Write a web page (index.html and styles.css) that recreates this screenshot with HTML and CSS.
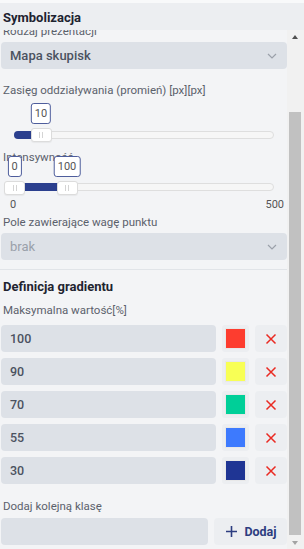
FILE: index.html
```html
<!DOCTYPE html>
<html lang="pl">
<head>
    <meta charset="UTF-8">
    <meta name="viewport" content="width=device-width, initial-scale=1.0">
    <link rel="stylesheet" href="styles.css">
    <title>Symbolizacja</title>
</head>
<body>
    <div class="panel">
        <h3 class="panel-title">Symbolizacja</h3>
        <div class="panel-body">
            <div class="viewport">
                <div class="content">
                    <label class="lbl">Rodzaj prezentacji</label>
                    <div class="select">
                        <span>Mapa skupisk</span>
                        <svg class="chev" width="10" height="6" viewBox="0 0 10 6"><path d="M1 1l4 4 4-4" fill="none" stroke="#9ba1aa" stroke-width="1.2"/></svg>
                    </div>

                    <label class="lbl lbl-gap">Zasięg oddziaływania (promień) [px][px]</label>
                    <div class="slider slider-one">
                        <div class="track" style="left:13px;right:13px"></div>
                        <div class="fill" style="left:13px;width:27px"></div>
                        <div class="bubble" style="left:40px">10</div>
                        <div class="thumb" style="left:40px"><i></i><i></i></div>
                    </div>

                    <label class="lbl lbl-int">Intensywność</label>
                    <div class="slider slider-two">
                        <div class="track" style="left:3px;right:13px"></div>
                        <div class="fill" style="left:13px;width:53px"></div>
                        <div class="bubble" style="left:13.5px">0</div>
                        <div class="bubble" style="left:66px">100</div>
                        <div class="thumb" style="left:13.5px"><i></i><i></i></div>
                        <div class="thumb" style="left:66px"><i></i><i></i></div>
                    </div>
                    <div class="ticks"><span>0</span><span>500</span></div>

                    <label class="lbl lbl-pole">Pole zawierające wagę punktu</label>
                    <div class="select select-off">
                        <span>brak</span>
                        <svg class="chev" width="10" height="6" viewBox="0 0 10 6"><path d="M1 1l4 4 4-4" fill="none" stroke="#9ba1aa" stroke-width="1.2"/></svg>
                    </div>

                    <hr class="divider">

                    <h4 class="section">Definicja gradientu</h4>
                    <label class="lbl lbl-max">Maksymalna wartość[%]</label>

                    <div class="rows">
                        <div class="row">
                            <div class="inp">100</div>
                            <div class="swatch"><span style="background:#fd3d2f"></span></div>
                            <button class="del"><svg width="12" height="12" viewBox="0 0 12 12"><path d="M1.5 1.5l9 9M10.5 1.5l-9 9" stroke="#ea2a22" stroke-width="1.5"/></svg></button>
                        </div>
                        <div class="row">
                            <div class="inp">90</div>
                            <div class="swatch"><span style="background:#f8ff55"></span></div>
                            <button class="del"><svg width="12" height="12" viewBox="0 0 12 12"><path d="M1.5 1.5l9 9M10.5 1.5l-9 9" stroke="#ea2a22" stroke-width="1.5"/></svg></button>
                        </div>
                        <div class="row">
                            <div class="inp">70</div>
                            <div class="swatch"><span style="background:#00cf98"></span></div>
                            <button class="del"><svg width="12" height="12" viewBox="0 0 12 12"><path d="M1.5 1.5l9 9M10.5 1.5l-9 9" stroke="#ea2a22" stroke-width="1.5"/></svg></button>
                        </div>
                        <div class="row">
                            <div class="inp">55</div>
                            <div class="swatch"><span style="background:#3d7afe"></span></div>
                            <button class="del"><svg width="12" height="12" viewBox="0 0 12 12"><path d="M1.5 1.5l9 9M10.5 1.5l-9 9" stroke="#ea2a22" stroke-width="1.5"/></svg></button>
                        </div>
                        <div class="row">
                            <div class="inp">30</div>
                            <div class="swatch"><span style="background:#1f3594"></span></div>
                            <button class="del"><svg width="12" height="12" viewBox="0 0 12 12"><path d="M1.5 1.5l9 9M10.5 1.5l-9 9" stroke="#ea2a22" stroke-width="1.5"/></svg></button>
                        </div>
                    </div>

                    <label class="lbl lbl-add">Dodaj kolejną klasę</label>
                    <div class="add-row">
                        <div class="inp"></div>
                        <button class="add"><svg width="11" height="11" viewBox="0 0 11 11"><path d="M5.5 0v11M0 5.5h11" stroke="#2d3d80" stroke-width="1.6"/></svg>Dodaj</button>
                    </div>
                </div>
            </div>
            <div class="scrollbar">
                <span class="arrow up"></span>
                <div class="sb-thumb"></div>
                <span class="arrow down"></span>
            </div>
        </div>
    </div>
</body>
</html>
```

FILE: styles.css
```css
*{box-sizing:border-box;}
body{margin:0;background:#f3f4f6;font-family:Roboto,"Noto Sans",sans-serif;}

.panel{padding-top:3px;background:#f8f9fa;height:549px;display:flex;flex-direction:column;}
.panel-title{margin:0;height:27px;padding:0 3px;background:#eceef1;font-size:13px;font-weight:700;line-height:29px;color:#1d2330;}
.panel-body{flex:1;display:flex;background:#f3f4f6;min-height:0;}

.viewport{width:287px;overflow:hidden;}
.content{margin-top:-6px;padding-left:1px;}

.lbl{display:block;padding-left:2px;font-size:11.5px;line-height:14px;color:#5b616c;margin-bottom:4px;}
.lbl-gap{margin-top:14px;margin-bottom:0;}
.lbl-int{margin-top:8px;margin-bottom:0;}
.lbl-pole{margin-top:3px;}
.lbl-max{margin-top:8px;margin-bottom:8px;}
.lbl-add{margin-top:15px;margin-bottom:5px;}

.select{height:27px;border-radius:4px;background:#dde1e7;display:flex;align-items:center;justify-content:space-between;padding:0 10px 0 9px;font-size:13px;font-weight:500;color:#4b5260;}
.select-off{color:#9aa0aa;font-weight:400;}

.slider{position:relative;}
.slider-one{height:45px;}
.slider-two{height:39px;margin-top:-8px;}
.track{position:absolute;height:8px;background:#f6f6f6;border:1px solid #dedede;border-radius:4px;}
.fill{position:absolute;height:8px;background:#2b3f8e;border-radius:4px 0 0 4px;}
.slider-one .track,.slider-one .fill{top:34px;}
.slider-two .track,.slider-two .fill{top:27px;}
.thumb{position:absolute;width:21px;height:14px;margin-left:-10.5px;background:#fff;border:1px solid #dcdcdc;border-radius:3px;display:flex;justify-content:center;align-items:center;gap:2px;box-shadow:0 1px 1px rgba(0,0,0,.05);}
.thumb i{width:1px;height:6px;background:#d4d4d4;}
.slider-one .thumb{top:31px;}
.slider-two .thumb{top:25px;}
.bubble{position:absolute;height:21px;min-width:14px;padding:0 3px;transform:translateX(-50%);background:#fff;border:1px solid #4e5d9c;border-radius:3px;font-size:11px;line-height:19px;color:#555;text-align:center;}
.slider-one .bubble{top:6px;}
.slider-two .bubble{top:0;}

.ticks{display:flex;justify-content:space-between;margin-top:3px;padding:0 3px 0 9px;font-size:11px;line-height:14px;color:#555;}

.divider{border:0;border-top:1px solid #e1e4e8;margin:9px 0 0 -1px;}
.section{margin:9px 0 0;padding-left:2px;font-size:13px;font-weight:700;line-height:16px;color:#1f2430;}

.rows{display:flex;flex-direction:column;gap:6px;}
.row{display:grid;grid-template-columns:1fr 27px 32px;column-gap:6px;height:27px;}
.inp{height:27px;border-radius:4px;background:#dde1e7;padding-left:9px;font-size:12.5px;font-weight:500;line-height:27px;color:#4b5260;}
.swatch{background:#eceef1;border-radius:3px;display:flex;align-items:center;justify-content:center;}
.swatch span{width:21px;height:21px;border:1px solid #e8e8e8;}
.del{border:0;padding:0;background:#eceef1;border-radius:4px;display:flex;align-items:center;justify-content:center;}

.add-row{display:grid;grid-template-columns:1fr 73px;column-gap:6px;height:27px;}
.add{border:0;padding:0 0 0 2px;background:#eceef1;border-radius:4px;display:flex;align-items:center;justify-content:center;gap:7px;font-family:Roboto,sans-serif;font-size:12.5px;font-weight:700;color:#2d3d80;}

.scrollbar{width:17px;background:#f1f1f1;position:relative;}
.arrow{position:absolute;left:5px;width:0;height:0;border-left:3.5px solid transparent;border-right:3.5px solid transparent;}
.arrow.up{top:5px;border-bottom:4px solid #505050;}
.arrow.down{bottom:4px;border-top:4px solid #a3a3a3;}
.sb-thumb{position:absolute;left:2px;right:3px;top:82px;bottom:14px;background:#c1c1c1;}
```
